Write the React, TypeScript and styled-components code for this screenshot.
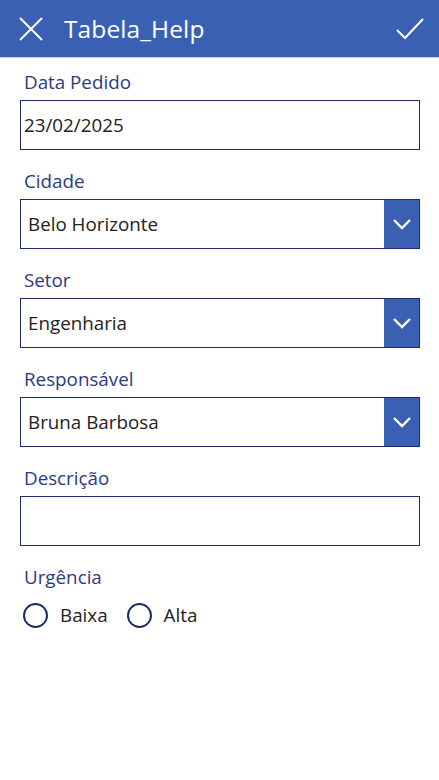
import React from "react";
import styled, { createGlobalStyle } from "styled-components";

const GlobalStyle = createGlobalStyle`
  html, body {
    margin: 0;
    padding: 0;
    background: #ffffff;
    font-family: "Open Sans", "Noto Sans", sans-serif;
  }
`;

const Screen = styled.div`
  width: 439px;
  height: 780px;
  background: #ffffff;
  display: flex;
  flex-direction: column;
`;

const Header = styled.header`
  height: 58px;
  background: #3a60b4;
  border-bottom: 1px solid #c9d3ec;
  display: flex;
  align-items: center;
  padding: 0 14px 0 16px;
  box-sizing: border-box;
`;

const IconButton = styled.button`
  width: 30px;
  height: 30px;
  padding: 0;
  border: 0;
  background: transparent;
  display: flex;
  align-items: center;
  justify-content: center;
  cursor: pointer;
`;

const Title = styled.h1`
  flex: 1;
  margin: 0 0 0 18px;
  color: #ffffff;
  font-size: 24.5px;
  font-weight: 400;
  letter-spacing: 0.1px;
`;

const Form = styled.form`
  display: flex;
  flex-direction: column;
  gap: 19px;
  padding: 12px 19px 0 20px;
`;

const Field = styled.div`
  display: flex;
  flex-direction: column;
  gap: 6px;
`;

const Label = styled.label`
  height: 24px;
  line-height: 24px;
  padding-left: 4px;
  font-size: 18.8px;
  color: #2c3a82;
`;

const Box = styled.div`
  height: 50px;
  box-sizing: border-box;
  border: 1px solid #1f2c6c;
  display: flex;
  align-items: stretch;
`;

const Value = styled.span<{ $inset: number }>`
  flex: 1;
  display: flex;
  align-items: center;
  padding-left: ${({ $inset }) => $inset}px;
  font-size: 18.8px;
  color: #222222;
`;

const Chevron = styled.div`
  width: 35px;
  background: #3a60b4;
  display: flex;
  align-items: center;
  justify-content: center;
`;

const RadioGroup = styled.div`
  display: flex;
  align-items: center;
  gap: 19px;
  padding: 7px 0 0 3px;
`;

const RadioOption = styled.label`
  display: flex;
  align-items: center;
  gap: 12px;
  font-size: 18.8px;
  color: #222222;
`;

const Circle = styled.span`
  width: 25px;
  height: 25px;
  box-sizing: border-box;
  border: 2px solid #1f2c6c;
  border-radius: 50%;
`;

const Select = ({ value }: { value: string }) => (
  <Box>
    <Value $inset={7}>{value}</Value>
    <Chevron>
      <svg width="20" height="12" viewBox="0 0 20 12">
        <path d="M2 2 L10 10 L18 2" fill="none" stroke="#ffffff" strokeWidth="2.4" />
      </svg>
    </Chevron>
  </Box>
);

export default function App() {
  return (
    <>
      <GlobalStyle />
      <Screen>
        <Header>
          <IconButton aria-label="Fechar">
            <svg width="26" height="26" viewBox="0 0 26 26">
              <path d="M2 2 L24 24 M24 2 L2 24" stroke="#ffffff" strokeWidth="2" />
            </svg>
          </IconButton>
          <Title>Tabela_Help</Title>
          <IconButton aria-label="Salvar">
            <svg width="30" height="24" viewBox="0 0 30 24">
              <path d="M2 13 L10 21 L28 2" fill="none" stroke="#ffffff" strokeWidth="2" />
            </svg>
          </IconButton>
        </Header>
        <Form>
          <Field>
            <Label>Data Pedido</Label>
            <Box>
              <Value $inset={3}>23/02/2025</Value>
            </Box>
          </Field>
          <Field>
            <Label>Cidade</Label>
            <Select value="Belo Horizonte" />
          </Field>
          <Field>
            <Label>Setor</Label>
            <Select value="Engenharia" />
          </Field>
          <Field>
            <Label>Responsável</Label>
            <Select value="Bruna Barbosa" />
          </Field>
          <Field>
            <Label>Descrição</Label>
            <Box />
          </Field>
          <Field>
            <Label>Urgência</Label>
            <RadioGroup>
              <RadioOption>
                <Circle />
                Baixa
              </RadioOption>
              <RadioOption>
                <Circle />
                Alta
              </RadioOption>
            </RadioGroup>
          </Field>
        </Form>
      </Screen>
    </>
  );
}
